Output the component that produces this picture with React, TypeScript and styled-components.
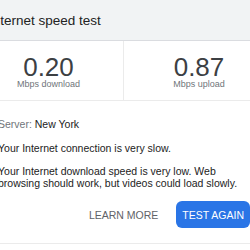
import React from "react";
import styled, { createGlobalStyle } from "styled-components";

const Global = createGlobalStyle`
  html, body { margin: 0; padding: 0; background: #ffffff; overflow: hidden; }
  body { font-family: "Liberation Sans", Arial, sans-serif; }
`;

const Card = styled.div`
  width: 300px;
  margin-left: -26px;
  background: #ffffff;
  border-bottom: 1px solid #ebebeb;
`;

const Header = styled.div`
  height: 40px;
  padding: 0 15px;
  display: flex;
  align-items: center;
  background: #f1f3f4;
  border-bottom: 1px solid #dadce0;
`;

const Title = styled.div`
  font-size: 13.5px;
  line-height: 16px;
  color: #222222;
  padding-top: 2px;
`;

const Stats = styled.div`
  display: grid;
  grid-template-columns: 1fr 1fr;
  height: 59px;
  border-bottom: 1px solid #ebebeb;
`;

const Stat = styled.div<{ $divider?: boolean }>`
  display: flex;
  flex-direction: column;
  align-items: center;
  padding-top: 14px;
  border-right: ${(p) => (p.$divider ? "1px solid #ebebeb" : "none")};
`;

const Value = styled.div`
  font-size: 26px;
  line-height: 24px;
  color: #3c4043;
`;

const Unit = styled.div`
  font-size: 9px;
  line-height: 11px;
  color: #70757a;
`;

const Body = styled.div`
  padding: 17px 24px 0;
  font-size: 10.5px;
  line-height: 12px;
  color: #222222;
`;

const Line = styled.p<{ $gap: number }>`
  margin: ${(p) => p.$gap}px 0 0;
`;

const Muted = styled.span`
  color: #70757a;
`;

const Actions = styled.div`
  display: flex;
  justify-content: flex-end;
  align-items: center;
  gap: 12px;
  padding: 12px 24px 15px;
`;

const Button = styled.button<{ $primary?: boolean }>`
  height: 27px;
  padding: 0 6px;
  border: none;
  border-radius: 6px;
  font-family: "Liberation Sans", Arial, sans-serif;
  font-size: 10.5px;
  letter-spacing: 0;
  background: ${(p) => (p.$primary ? "#2a75e6" : "transparent")};
  color: ${(p) => (p.$primary ? "#ffffff" : "#5f6368")};
`;

export default function App() {
  return (
    <>
      <Global />
      <Card>
        <Header>
          <Title>Internet speed test</Title>
        </Header>
        <Stats>
          <Stat $divider>
            <Value>0.20</Value>
            <Unit>Mbps download</Unit>
          </Stat>
          <Stat>
            <Value>0.87</Value>
            <Unit>Mbps upload</Unit>
          </Stat>
        </Stats>
        <Body>
          <Line $gap={0}>
            <Muted>Server: </Muted>New York
          </Line>
          <Line $gap={12}>Your Internet connection is very slow.</Line>
          <Line $gap={11}>
            Your Internet download speed is very low. Web browsing should work, but videos could load slowly.
          </Line>
        </Body>
        <Actions>
          <Button>LEARN MORE</Button>
          <Button $primary>TEST AGAIN</Button>
        </Actions>
      </Card>
    </>
  );
}
